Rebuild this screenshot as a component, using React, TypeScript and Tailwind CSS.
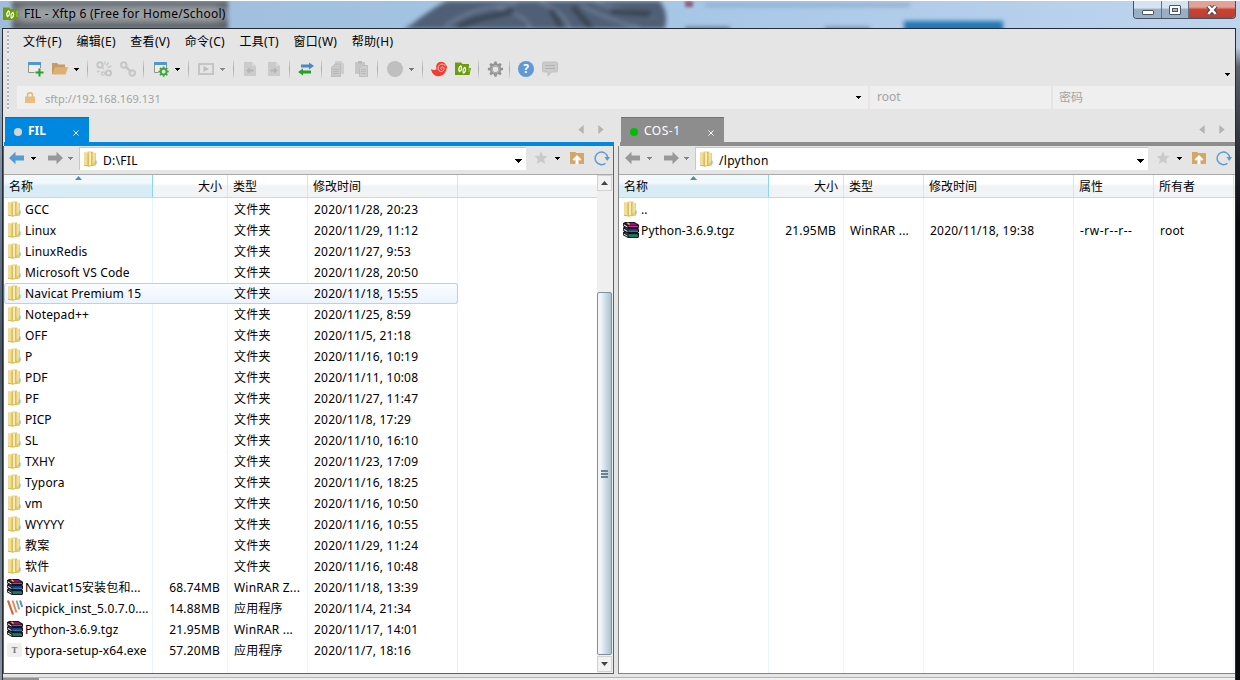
import type { ReactNode } from "react";

type IconKind = "folder" | "rar" | "picpick" | "typora";

interface FileRow {
	icon: IconKind;
	name: string;
	size?: string;
	type?: string;
	date?: string;
	attr?: string;
	owner?: string;
	selected?: boolean;
}

interface Column {
	key: "name" | "size" | "type" | "date" | "attr" | "owner";
	label: string;
	width: string;
}

const folder = (name: string, date: string, selected = false): FileRow => ({
	icon: "folder",
	name,
	type: "文件夹",
	date,
	selected,
});

const localFiles: FileRow[] = [
	folder("GCC", "2020/11/28, 20:23"),
	folder("Linux", "2020/11/29, 11:12"),
	folder("LinuxRedis", "2020/11/27, 9:53"),
	folder("Microsoft VS Code", "2020/11/28, 20:50"),
	folder("Navicat Premium 15", "2020/11/18, 15:55", true),
	folder("Notepad++", "2020/11/25, 8:59"),
	folder("OFF", "2020/11/5, 21:18"),
	folder("P", "2020/11/16, 10:19"),
	folder("PDF", "2020/11/11, 10:08"),
	folder("PF", "2020/11/27, 11:47"),
	folder("PICP", "2020/11/8, 17:29"),
	folder("SL", "2020/11/10, 16:10"),
	folder("TXHY", "2020/11/23, 17:09"),
	folder("Typora", "2020/11/16, 18:25"),
	folder("vm", "2020/11/16, 10:50"),
	folder("WYYYY", "2020/11/16, 10:55"),
	folder("教案", "2020/11/29, 11:24"),
	folder("软件", "2020/11/16, 10:48"),
	{ icon: "rar", name: "Navicat15安装包和...", size: "68.74MB", type: "WinRAR Z...", date: "2020/11/18, 13:39" },
	{ icon: "picpick", name: "picpick_inst_5.0.7.0....", size: "14.88MB", type: "应用程序", date: "2020/11/4, 21:34" },
	{ icon: "rar", name: "Python-3.6.9.tgz", size: "21.95MB", type: "WinRAR ...", date: "2020/11/17, 14:01" },
	{ icon: "typora", name: "typora-setup-x64.exe", size: "57.20MB", type: "应用程序", date: "2020/11/7, 18:16" },
];

const remoteFiles: FileRow[] = [
	{ icon: "folder", name: ".." },
	{
		icon: "rar",
		name: "Python-3.6.9.tgz",
		size: "21.95MB",
		type: "WinRAR ...",
		date: "2020/11/18, 19:38",
		attr: "-rw-r--r--",
		owner: "root",
	},
];

const localColumns: Column[] = [
	{ key: "name", label: "名称", width: "w-[149px]" },
	{ key: "size", label: "大小", width: "w-[75px]" },
	{ key: "type", label: "类型", width: "w-[80px]" },
	{ key: "date", label: "修改时间", width: "w-[150px]" },
];

const remoteColumns: Column[] = [
	{ key: "name", label: "名称", width: "w-[150px]" },
	{ key: "size", label: "大小", width: "w-[75px]" },
	{ key: "type", label: "类型", width: "w-[80px]" },
	{ key: "date", label: "修改时间", width: "w-[150px]" },
	{ key: "attr", label: "属性", width: "w-[80px]" },
	{ key: "owner", label: "所有者", width: "w-[80px]" },
];

function Svg({ children, className = "" }: { children: ReactNode; className?: string }) {
	return (
		<svg viewBox="0 0 16 16" className={`h-4 w-4 shrink-0 ${className}`} fill="none">
			{children}
		</svg>
	);
}

function Caret({ color = "#000", className = "" }: { color?: string; className?: string }) {
	return (
		<svg viewBox="0 0 5 3" className={`h-[3px] w-[5px] shrink-0 ${className}`} shapeRendering="crispEdges">
			<path d="M0 0h5v1H4v1H3v1H2V2H1V1H0z" fill={color} />
		</svg>
	);
}

function BigCaret() {
	return (
		<svg viewBox="0 0 7 4" className="h-1 w-[7px] shrink-0" shapeRendering="crispEdges">
			<path d="M0 0h7v1H6v1H5v1H4v1H3V3H2V2H1V1H0z" fill="#000" />
		</svg>
	);
}

function FolderIcon() {
	return (
		<Svg>
			<path d="M1 1.5h3.500V.5H10v1.300h3V14l-5 .7-2 .8-5-.7z" fill="#e8d07c" />
			<path d="M1 1.5h3.500v13.200L1 14.300z" fill="#efdd98" />
			<path d="M4.500 2.500 6 2v13.300l-1.500-.6z" fill="#dcbf58" />
			<path d="M6 1.800 8.300 1v12.700L6 15.200z" fill="#f8eebd" />
			<path d="M8.300 1h1.200v12.500l-1.200.5z" fill="#d2b14a" />
			<path d="M9.500 2H12v8.500l-2.500 2z" fill="#f0e09c" />
			<path d="M1 14.300 6 15l7-1.200" stroke="#d9bb57" />
			<path d="M13 9.500V13" stroke="#63b7d6" />
		</Svg>
	);
}

function RarIcon() {
	return (
		<Svg>
			<path d="M0 1.200 2 0h9.500L16 2.800v2.900h-1L16 7v3h-1l1 1.500V15l-1 1H5L0 13.300v-3l1-.6-1-1.500V5.700L1 5 0 4z" fill="#15121c" />
			<path d="M2 1h9.300l3.200 2.200H5.300z" fill="#8e1567" />
			<path d="M5.500 3.800H15V5H5.500z" fill="#d02f96" />
			<path d="M.8 2.300 4.500 4.400v1L.8 3.400M.8 6.800 4.500 9v1L.8 8M.8 11.500l3.700 2.200v1L.8 12.600" fill="#f4f4f6" />
			<path d="M5.500 8.500H15v1.400H5.500z" fill="#2c86d6" />
			<path d="m2 6 3.300 1.700h9.200" stroke="#1c4f96" />
			<path d="M5.500 13.300H15v1.400H5.500z" fill="#1da577" />
			<path d="m2 10.600 3.300 1.900h9.200" stroke="#137048" />
			<path d="m4.500.800 2 1.600" stroke="#f1cf35" strokeWidth="1.300" />
		</Svg>
	);
}

function FileIcon({ kind }: { kind: IconKind }) {
	if (kind === "folder") return <FolderIcon />;
	if (kind === "rar") return <RarIcon />;
	if (kind === "picpick") {
		return (
			<Svg>
				<path d="m1 .5 5 14" stroke="#d8643f" strokeWidth="2.200" />
				<path d="m5.500.500 4 12" stroke="#e58a5c" strokeWidth="2" />
				<path d="m9.500.500 2.800 9" stroke="#8aa39f" strokeWidth="1.900" />
				<path d="m13 .5 2.200 6.500" stroke="#5b8fbd" strokeWidth="2" />
			</Svg>
		);
	}
	return (
		<span className="flex h-3.5 w-[15px] items-center justify-center rounded-[2px] bg-[#efefef] font-['Liberation_Serif',serif] text-[9px] leading-none font-bold tracking-normal text-[#777]">
			T
		</span>
	);
}

function XftpIcon() {
	return (
		<Svg>
			<path d="M0 1.500h6l1.500 1.500H14v4h2l-1.500 7H0z" fill="#6c9b0c" />
			<path d="M14 5v6" stroke="#e5e5e5" strokeWidth=".5" />
			<path d="M6.200 4.700a4 4 0 0 0-1.800 5.800l1.800-1.200M8.200 12.300a4 4 0 0 0 1.800-5.800L8.200 7.700" stroke="#fff" strokeWidth="1.300" />
			<path d="M6.300 5v4.300M8.100 12V7.700" stroke="#fff" strokeWidth="1.100" />
		</Svg>
	);
}

const GEAR =
	"M6.9 0h2.2l.4 2.1 1.3.5L12.6 1.4l1.6 1.6-1.2 1.8.5 1.3 2.1.4v2.2l-2.1.4-.5 1.3 1.2 1.8-1.6 1.6-1.8-1.2-1.3.5-.4 2.1H6.9l-.4-2.1-1.3-.5-1.8 1.2-1.6-1.6L3 10.4l-.5-1.3L.4 8.7V6.5l2.1-.4L3 4.8 1.8 3l1.6-1.6 1.8 1.2 1.3-.5zM8 5a2.8 2.8 0 1 0 0 5.6A2.8 2.8 0 0 0 8 5z";

function Sep({ className = "ml-[7px]" }: { className?: string }) {
	return (
		<span className={`mr-2 h-[18px] w-px shrink-0 bg-gradient-to-b from-[#d8d8d8] via-[#aaa] to-[#d8d8d8] ${className}`} />
	);
}

function MainToolbar() {
	return (
		<div className="flex h-[25px] items-center pb-px pl-[11px]">
			<Svg>
				<path d="M.5 2.500h12v9H.5z" fill="#eee" stroke="#929292" />
				<path d="M0 1h13v3H0z" fill="#5297d2" />
				<path d="M11.500 7v9M6.500 11.500h9" stroke="#e5e5e5" strokeWidth="3.500" />
				<path d="M11.500 7.500v8M7.500 11.500h8" stroke="#26a327" strokeWidth="2" />
			</Svg>
			<Svg className="ml-2">
				<path d="M0 2h5l1.500 1.500H13V6H3.500L1 13H0z" fill="#c99b61" />
				<path d="M3.200 6H16l-2.400 7.500H.5z" fill="#dcaf76" />
			</Svg>
			<Caret className="mr-px ml-1.5" />
			<Sep />
			<Svg>
				<circle cx="4" cy="4" r="2.700" stroke="#c6c6c6" strokeWidth="2" />
				<circle cx="12.500" cy="12" r="2.600" stroke="#c6c6c6" strokeWidth="2" />
				<circle cx="7" cy="12.500" r="1.600" stroke="#c9c9c9" strokeWidth="1.500" />
				<path d="m6 6 2 2M10 9.500l1 .5M9 .5v3M12.500 1.500l-2 3M15.500 5l-4 1.500M1 11l2.500-1" stroke="#c8c8c8" strokeWidth="1.400" />
			</Svg>
			<Svg className="ml-2">
				<circle cx="3.800" cy="4" r="2.700" stroke="#c6c6c6" strokeWidth="2" />
				<circle cx="12.300" cy="12" r="2.700" stroke="#c6c6c6" strokeWidth="2" />
				<path d="m5 5 6 6" stroke="#c6c6c6" strokeWidth="2.500" />
			</Svg>
			<Sep />
			<Svg className="ml-px">
				<path d="M1.500 2.500h12v9h-12z" fill="#eee" stroke="#929292" />
				<path d="M1 1h13v3H1z" fill="#5297d2" />
				<circle cx="10.500" cy="10.500" r="5" fill="#e5e5e5" />
				<path d={GEAR} transform="translate(5.2 5.400) scale(.68)" fill="#3fa83a" fillRule="evenodd" />
			</Svg>
			<Caret className="mr-px ml-1.5" />
			<Sep />
			<Svg className="ml-px">
				<path d="M1 3h14v10H1z" stroke="#c5c5c5" strokeWidth="2" />
				<path d="M5.500 5v6L11 8z" fill="#bdbdbd" />
			</Svg>
			<Caret color="#8b8b8b" className="mr-px ml-1.5" />
			<Sep />
			<Svg>
				<path d="M2 1h8l4 4v10H2z" fill="#cbcbcb" />
				<path d="M10 1v4h4" fill="#dadada" />
				<path d="m4 9.500 4-3v2h3.500v2H8v2z" fill="#b4b4b4" />
			</Svg>
			<Svg className="ml-2">
				<path d="M2 1h8l4 4v10H2z" fill="#cbcbcb" />
				<path d="M10 1v4h4" fill="#dadada" />
				<path d="m12 9.500-4-3v2H4.500v2H8v2z" fill="#b4b4b4" />
			</Svg>
			<Sep />
			<Svg>
				<path d="M3 3.500h8V1.500l5 3.500-5 3.500v-2H3z" fill="#4c88c8" />
				<path d="M13 9.500H5v-2L0 11l5 3.500v-2h8z" fill="#26a126" />
			</Svg>
			<Sep />
			<Svg>
				<path d="M5 0h6l3 3v10H5z" fill="#cecece" />
				<path d="M1.500 6.500 5 3h5.500v12.500h-9z" fill="#c8c8c8" stroke="#b9b9b9" strokeWidth=".8" />
				<path d="M3 8.500h6m-6 2h6m-6 2h6" stroke="#b5b5b5" strokeWidth=".8" />
			</Svg>
			<Svg className="ml-2">
				<path d="M1 1h10v12H1z" fill="#c6c6c6" />
				<path d="M4 0h4v3H4z" fill="#bbb" />
				<path d="M5.500 7 8 4.500h5.500v11h-8z" fill="#cdcdcd" stroke="#b9b9b9" strokeWidth=".8" />
				<path d="M7 8.500h5m-5 2h5m-5 2h5" stroke="#b5b5b5" strokeWidth=".8" />
			</Svg>
			<Sep />
			<Svg className="ml-px">
				<circle cx="8" cy="8" r="8" fill="#bfbfbf" />
			</Svg>
			<Caret color="#777" className="mr-px ml-1.5" />
			<Sep />
			<Svg>
				<path
					d="M0 8c2 1.200 4 1.200 5.500.2C4.300 4.200 6.500.800 10.200.800c2.300 0 4.300 1.200 4.900 3.700l.9.300c-.1 5.800-3.200 10.400-8.700 10.400C3.500 15.200.7 12.400 0 8z"
					fill="#ef3f32"
				/>
				<path
					d="M14.500 5.200C13.300 2.800 9.700 2.300 8 4.500c-1.700 2.200-.9 5.500 1.700 6 2 .4 3.700-1.200 3.400-3-.3-1.400-1.900-2-2.900-1.100-.8.800-.4 2 .6 2"
					stroke="#f6e3e1"
					strokeWidth=".8"
				/>
			</Svg>
			<div className="ml-2 flex">
				<XftpIcon />
			</div>
			<Sep />
			<Svg>
				<path d={GEAR} transform="translate(.5 .5)" fill="#929292" fillRule="evenodd" />
				<circle cx="8.500" cy="8.300" r="3.700" stroke="#b3b3b3" strokeWidth="1.200" />
			</Svg>
			<Sep className="ml-1.5" />
			<span className="flex h-4 w-4 items-center justify-center rounded-full bg-[#5f98d2] text-[12px] leading-none font-bold tracking-normal text-white">
				?
			</span>
			<Svg className="ml-2">
				<path
					d="M2 1h12a1.500 1.500 0 0 1 1.500 1.500v7A1.500 1.500 0 0 1 14 11H9.500L6 15v-4H2A1.500 1.500 0 0 1 .5 9.500v-7A1.500 1.500 0 0 1 2 1z"
					fill="#cbcbcb"
					stroke="#bdbdbd"
					strokeWidth=".8"
				/>
				<path d="M3 4.500h10M3 7.500h10" stroke="#b2b2b2" strokeWidth="1.200" />
			</Svg>
		</div>
	);
}

function Arrow({ color, flip = false }: { color: string; flip?: boolean }) {
	return (
		<Svg className={flip ? "-scale-x-100" : ""}>
			<path d="M0 8l6.500-6.200V5.500H15v5H6.500v3.700z" fill={color} />
		</Svg>
	);
}

function TabStrip({ name, active }: { name: string; active: boolean }) {
	return (
		<div className={`flex h-[29px] items-end border-b-4 ${active ? "border-[#0087e0]" : "border-[#8d8d8d]"}`}>
			<div
				className={`ml-px flex h-[25px] items-center border-t text-white ${
					active ? "w-[84px] border-[#0871bd] bg-[#0087e0] font-bold" : "w-[103px] border-[#717171] bg-[#8d8d8d]"
				}`}
			>
				<span className={`mt-1 ml-[9px] h-2 w-2 rounded-full ${active ? "bg-[#d6d6d6]" : "bg-[#00bd00]"}`} />
				<span
					className={`mt-0.5 grow ${active ? "ml-1.5 text-[12px] tracking-normal" : "ml-1.5 text-[12px] tracking-[0.5px]"}`}
				>
					{name}
				</span>
				<svg viewBox="0 0 6 6" className="mt-[5px] mr-2.5 h-[6px] w-[6px]" stroke="#fff">
					<path d="m.5.500 5 5m0-5-5 5" />
				</svg>
			</div>
			<div className="mr-[10px] mb-2 ml-auto flex gap-[14px]">
				<svg viewBox="0 0 6 10" className="h-[9px] w-[6px]">
					<path d="M6 0v10L0 5z" fill="#b4b4b4" />
				</svg>
				<svg viewBox="0 0 6 10" className="h-[9px] w-[6px]">
					<path d="M0 0v10l6-5z" fill="#b4b4b4" />
				</svg>
			</div>
		</div>
	);
}

function PathBar({ path, active }: { path: string; active: boolean }) {
	return (
		<div className={`flex h-7 items-center pb-1 ${active ? "pl-[5px]" : "pl-1.5"}`}>
			<Arrow color={active ? "#559bd4" : "#999"} />
			<Caret color={active ? "#000" : "#858585"} className="ml-1.5" />
			<span className="ml-[11px] flex">
				<Arrow color="#999" flip />
			</span>
			<Caret color="#858585" className="ml-[5px]" />
			<div
				className={`mt-px ml-1.5 flex h-[23px] items-center border-t border-l border-[#c4c9d0] bg-white pl-[3px] ${
					active ? "w-[447px] pr-1" : "w-[453px] pr-1"
				}`}
			>
				<FolderIcon />
				<span className="mt-1 ml-1 grow text-[12px] tracking-[0.3px]">{path}</span>
				<span className="mt-1">
					<BigCaret />
				</span>
			</div>
			<Svg className="ml-[7px]">
				<path d="m8 1.500 2 4.300 4.500.4-3.400 3.100 1 4.700L8 11.500 3.900 14l1-4.700-3.400-3.100 4.500-.4z" fill="#cbcbcb" />
			</Svg>
			<Caret className="ml-1.5" />
			<Svg className="ml-[9px]">
				<path d="M1 2h5l1.500 1H15v11H1z" fill="#d6a668" />
				<path d="M8 5 12.500 9.500l-1.700 1.200L9.500 9.500V14h-3V9.500l-1.300 1.200-1.700-1.200z" fill="#fff" />
			</Svg>
			<Svg className="ml-[9px]">
				<path d="M11.500 13.200A6.300 6.300 0 1 1 13.700 7.500" stroke="#559bd4" strokeWidth="1.400" />
				<path d="M10.500 7H16l-2.800 4z" fill="#559bd4" />
			</Svg>
		</div>
	);
}

function HeaderCell({ column }: { column: Column }) {
	const sorted = column.key === "name";
	return (
		<div
			className={`relative shrink-0 border-r ${column.width} ${
				sorted
					? "border-[#8fd5f0] bg-linear-to-b from-[#f2f9fc] from-35% to-[#d8ecf6] to-50%"
					: "border-[#dfe1e3]"
			} ${column.key === "size" ? "pr-[5px] text-right" : "pl-[5px]"}`}
		>
			<span className="tracking-normal">{column.label}</span>
			{sorted && (
				<svg viewBox="0 0 7 4" className="absolute top-px left-[71px] h-1 w-[7px]">
					<path d="M3.500 0 7 4H0z" fill="#4c90b3" />
				</svg>
			)}
		</div>
	);
}

function FileList({ columns, rows, active }: { columns: Column[]; rows: FileRow[]; active: boolean }) {
	return (
		<div className="min-w-0 grow">
			<div className="flex h-[23px] border-b border-[#d5d5d5] bg-linear-to-b from-white from-40% to-[#f2f3f5] to-50% leading-[23px]">
				{columns.map((column) => (
					<HeaderCell key={column.key} column={column} />
				))}
			</div>
			<div className="grid h-[475px]">
				<div className="col-start-1 row-start-1 flex">
					{columns.map((column) => (
						<span key={column.key} className={`shrink-0 border-r border-[#eaf3fd] ${column.width}`} />
					))}
				</div>
				<div className="z-10 col-start-1 row-start-1 pt-px">
					{rows.map((row) => (
						<div
							key={row.name}
							className={`flex h-[21px] leading-[21px] whitespace-nowrap ${
								row.selected
									? "w-[454px] rounded-[3px] bg-linear-to-b from-[#fbfdff] to-[#ebf3fd] ring-1 ring-[#b8d0f5] ring-inset"
									: ""
							}`}
						>
							{columns.map((column) =>
								column.key === "name" ? (
									<div
										key="name"
										className={`flex shrink-0 items-center ${active ? "pl-[3px]" : "pl-1"} ${column.width}`}
									>
										<span className="mb-px flex w-4">
											<FileIcon kind={row.icon} />
										</span>
										<span className="ml-0.5 tracking-[0.15px]">{row.name}</span>
									</div>
								) : (
									<div
										key={column.key}
										className={`shrink-0 ${column.key === "size" ? "pr-2 text-right" : "pl-1.5"} ${
											column.key === "attr" ? "tracking-[0.5px]" : ""
										} ${column.width}`}
									>
										{row[column.key]}
									</div>
								),
							)}
						</div>
					))}
				</div>
			</div>
		</div>
	);
}

function ScrollButton({ down = false }: { down?: boolean }) {
	return (
		<div className="flex h-4 w-[15px] shrink-0 items-center justify-center border border-[#d2d2d2] bg-[#f2f2f2]">
			<svg viewBox="0 0 7 4" className={`h-1 w-[7px] ${down ? "" : "rotate-180"}`}>
				<path d="M0 0h7L3.500 4z" fill="#444" />
			</svg>
		</div>
	);
}

function ScrollBar() {
	return (
		<div className="flex w-4 shrink-0 flex-col bg-[#efefef] pb-px">
			<ScrollButton />
			<div className="mt-[101px] mb-px flex w-[15px] grow flex-col items-center justify-center gap-px rounded-[2px] border border-[#7f8f9d] bg-linear-to-r from-[#f2f5f7] from-20% via-[#cfdfe8] via-55% to-[#adc1ce]">
				<span className="h-0.5 w-[7px] bg-[#6b818d]" />
				<span className="h-0.5 w-[7px] bg-[#6b818d]" />
				<span className="h-0.5 w-[7px] bg-[#6b818d]" />
			</div>
			<ScrollButton down />
		</div>
	);
}

interface PanelProps {
	name: string;
	path: string;
	active?: boolean;
	columns: Column[];
	rows: FileRow[];
}

function Panel({ name, path, active = false, columns, rows }: PanelProps) {
	return (
		<section className={`flex shrink-0 flex-col ${active ? "w-[611px]" : "w-[617px]"}`}>
			<div className={active ? "pl-px" : "pl-0.5"}>
				<TabStrip name={name} active={active} />
			</div>
			<div
				className={`flex grow flex-col border-b border-l ${
					active ? "border-r border-[#087bc7]" : "border-[#858585]"
				}`}
			>
				<PathBar path={path} active={active} />
				<div className="flex grow border-t border-[#a9a9a9] bg-white">
					<FileList columns={columns} rows={rows} active={active} />
					{active && <ScrollBar />}
				</div>
			</div>
		</section>
	);
}

function TitleBar() {
	return (
		<header className="relative flex h-7 items-start justify-between overflow-hidden border-t border-white bg-linear-to-r from-[#9fbddb] via-[#a4c5e6] to-[#bfd5ee]">
			<div className="absolute top-0 left-3 h-7 w-[216px] bg-linear-to-b from-[#52575b] via-[#858b90] to-[#4a4e53] blur-[2px]" />
			<div className="absolute top-1.5 left-5 h-3.5 w-[200px] bg-[#a0a4a8] blur-[5px]" />
			<svg viewBox="0 0 290 28" className="absolute top-0 left-[385px] h-7 w-[290px] blur-[2px]">
				<path d="M15 30C32 22 40 10 66-2h207c9 10 10 20 6 32z" fill="#4f5f75" />
				<path
					d="M60 25c30-20 50-19 72-22M145 28c0-11-20-18-35-22m75 22c-5-15-18-22-30-27m55 0c20 8 45 9 58 15m-72-12c15 9 38 18 58 22"
					stroke="#6c7c95"
					strokeWidth="3"
					fill="none"
				/>
				<path
					d="M73 27c20-13 40-10 55-18m38 0 10 17m12-20 18 21m20-17 40 3"
					stroke="#39434f"
					strokeWidth="5"
					fill="none"
				/>
			</svg>
			<div className="absolute top-0 left-[685px] h-1.5 w-2 bg-[#905e7a] blur-[1.5px]" />
			<div className="absolute top-0.5 left-[705px] h-1 w-[205px] bg-[#8fb0d2] blur-[2px]" />
			<div className="absolute top-[26px] left-[685px] h-1 w-[45px] bg-[#5e7287] blur-[2px]" />
			<div className="absolute top-[26px] left-[825px] h-1 w-[45px] bg-[#6c89a8] blur-[2px]" />
			<div className="absolute top-5 left-[904px] h-3 w-[99px] bg-[#2478b4] blur-[2px]" />
			<div className="relative flex items-center pt-1 pl-[3px]">
				<XftpIcon />
				<span className="ml-[5px] text-[12px] leading-[18px] tracking-[0.25px]">FIL - Xftp 6 (Free for Home/School)</span>
			</div>
			<div className="relative mr-1 flex h-[18px] w-[103px] overflow-hidden rounded-b-[4px] border border-t-0 border-[#455161]">
				<button
					type="button"
					className="flex w-7 items-center justify-center border-r border-[#5f7187] bg-linear-to-b from-[#d6e3f1] from-40% to-[#9aaec5] to-50%"
				>
					<span className="mt-1.5 h-[5px] w-3 rounded-[1px] border border-[#4b5565] bg-white" />
				</button>
				<button
					type="button"
					className="flex w-[27px] items-center justify-center border-r border-[#5f7187] bg-linear-to-b from-[#d6e3f1] from-40% to-[#9aaec5] to-50%"
				>
					<span className="flex h-2.5 w-3 items-center justify-center rounded-[1px] border border-[#4b5565] bg-white">
						<span className="h-1 w-1.5 border border-[#4b5565] bg-[#a4b8cd]" />
					</span>
				</button>
				<button
					type="button"
					className="flex grow items-center justify-center bg-linear-to-b from-[#e3a197] from-35% via-[#c94431] via-50% to-[#b64131]"
				>
					<svg viewBox="0 0 12 10" className="h-2.5 w-3">
						<path d="m2 1 8 8m0-8-8 8" stroke="#534049" strokeWidth="4.500" />
						<path d="m2.300 1 7.400 8m0-8-7.400 8" stroke="#fff" strokeWidth="2.500" />
					</svg>
				</button>
			</div>
		</header>
	);
}

const menus = ["文件(F)", "编辑(E)", "查看(V)", "命令(C)", "工具(T)", "窗口(W)", "帮助(H)"];

function Grip({ className }: { className: string }) {
	return (
		<span
			className={`w-0.5 shrink-0 bg-[repeating-linear-gradient(to_bottom,#b0b0b0_0_2px,#f0f0f0_2px_4px)] ${className}`}
		/>
	);
}

export default function App() {
	return (
		<div className="flex h-[680px] w-[1240px] flex-col overflow-hidden bg-[#e5e5e5] font-['Noto_Sans','Noto_Sans_CJK_SC',sans-serif] text-[12px] tracking-[0.2px] text-black">
			<TitleBar />
			<div className="flex grow">
				<div className="w-0.5 shrink-0 bg-linear-to-b from-[#a8bfd7] via-[#455362] to-[#8994a0]" />
				<main className="flex w-[1234px] shrink-0 flex-col border-x border-t border-[#252a33]">
					<nav className="flex h-7 items-center pl-1">
						<Grip className="h-6" />
						<div className="mb-0.5 ml-[14px] flex gap-[14.5px] tracking-[0.3px]">
							{menus.map((menu) => (
								<span key={menu}>{menu}</span>
							))}
						</div>
					</nav>
					<div className="flex h-[55px] pl-1">
						<Grip className="mt-0.5 h-[52px]" />
						<div className="ml-2 flex grow flex-col">
							<div className="flex justify-between">
								<MainToolbar />
								<Caret className="mt-4 mr-[5px]" />
							</div>
							<div className="mt-1 flex h-[23px] gap-0.5 text-[#a3a3a3]">
								<div className="flex w-[851px] items-center bg-[#efefef] pr-[7px] pl-2">
									<svg viewBox="0 0 10 11" className="h-[11px] w-2.5 shrink-0" fill="none">
										<path d="M2.500 5V3.300a2.500 2.500 0 0 1 5 0V5" stroke="#deb77c" strokeWidth="1.500" />
										<path d="M0 4.500h10V11H0z" fill="#e7bd82" />
									</svg>
									<span className="mt-[3px] ml-2.5 grow text-[11px] tracking-[0.02px]">sftp://192.168.169.131</span>
									<Caret />
								</div>
								<div className="w-[181px] bg-[#efefef] pl-[7px] leading-[22px] tracking-normal">root</div>
								<div className="mr-px grow bg-[#efefef] pl-1.5 leading-[23px] tracking-normal">密码</div>
							</div>
						</div>
					</div>
					<div className="mt-[5px] flex h-[557px] gap-1">
						<Panel name="FIL" path="D:\FIL" active columns={localColumns} rows={localFiles} />
						<Panel name="COS-1" path="/lpython" columns={remoteColumns} rows={remoteFiles} />
					</div>
					<footer className="grow pt-[3px]">
						<div className="h-full border-t border-[#b3b3b3] bg-[#f0f0f0]">
							<div className="h-0.5 w-9 bg-[#929292]" />
						</div>
					</footer>
				</main>
				<div className="grow bg-linear-to-b from-[#b8cde5] from-3% via-[#59626f] via-6% to-[#080a0f] to-30%" />
			</div>
		</div>
	);
}
